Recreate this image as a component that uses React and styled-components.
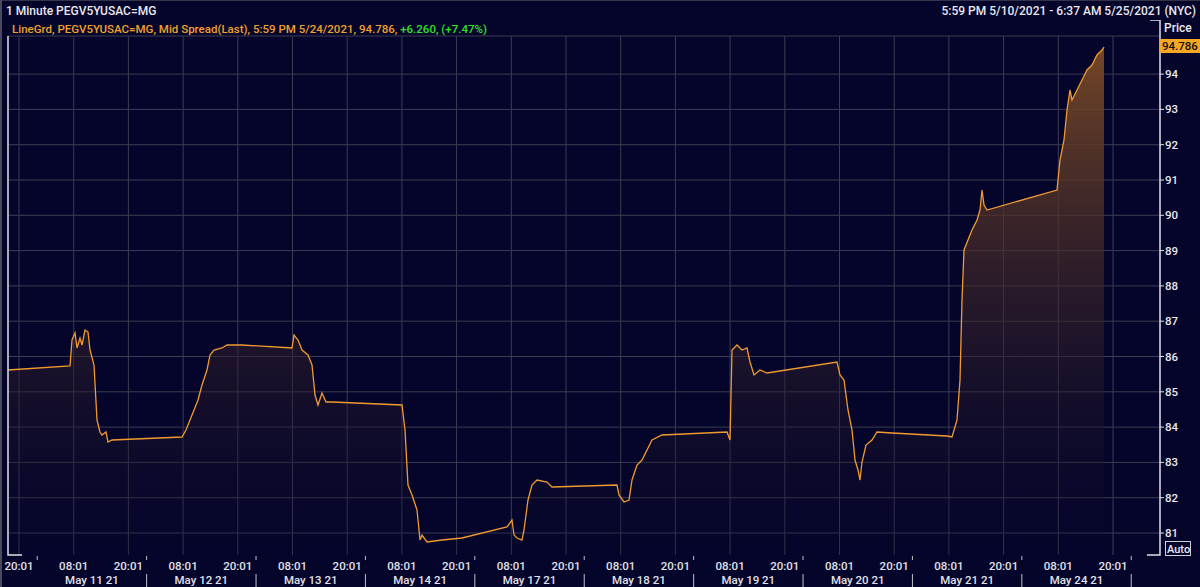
import React from "react";
import styled, { createGlobalStyle } from "styled-components";

const Global = createGlobalStyle`
  html, body { margin: 0; padding: 0; background: #05052b; }
  body { font-family: Roboto, "Liberation Sans", sans-serif; }
`;

const Window = styled.div`
  width: 1200px; height: 587px; background: #05052b; overflow: hidden;
  display: flex; flex-direction: column; border-left: 2px solid #4a4a5a; box-sizing: border-box;
`;
const Header = styled.div`
  height: 20px; display: flex; justify-content: space-between; align-items: center;
  padding: 0 4px 0 4px; color: #e8e8ee; font-size: 12px; font-weight: 500; border-top: 1px solid #33334a;
`;
const Body = styled.div`
  position: relative; flex: 1;
`;
const Legend = styled.div`
  position: absolute; left: 10px; top: 2px; font-size: 11.5px; font-weight: 500; color: #f0a030; white-space: pre;
`;
const Green = styled.span` color: #2fe02f; `;

const X0 = 17, DX = 54.7;
const yOf = (p) => 533 - (p - 81) * 35.3;

const pts = [[6,370],[68,366],[70,340],[73,333],[75,348],[78,338],[80,345],[83,330],[86,332],[88,350],[92,365],[95,420],[98,432],[100,435],[104,432],[106,442],[110,440],[180,437],[184,430],[190,415],[196,400],[200,385],[205,370],[208,355],[212,350],[220,348],[225,345],[240,345],[290,348],[292,335],[296,340],[300,350],[306,355],[310,365],[313,395],[316,405],[320,393],[324,402],[330,402],[400,405],[403,430],[406,485],[410,495],[415,510],[418,540],[420,535],[425,542],[440,540],[460,538],[505,527],[510,520],[512,535],[515,538],[520,540],[522,530],[526,500],[530,485],[535,480],[545,482],[550,487],[615,485],[617,495],[622,502],[627,500],[630,480],[635,465],[640,460],[650,440],[660,435],[725,432],[728,440],[730,350],[735,345],[740,350],[745,348],[748,362],[752,375],[758,370],[765,373],[835,362],[838,375],[842,380],[846,410],[850,430],[853,460],[856,470],[858,480],[860,462],[864,445],[870,440],[875,432],[890,433],[945,436],[950,437],[955,420],[958,380],[960,300],[962,250],[966,240],[970,230],[975,220],[978,210],[980,190],[982,205],[985,210],[1055,190],[1058,160],[1062,140],[1065,110],[1068,90],[1070,100],[1075,90],[1080,80],[1085,70],[1090,65],[1095,55],[1100,50],[1102,47]];

const line = pts.map((p, i) => (i ? "L" : "M") + p[0] + " " + p[1]).join(" ");
const area = line + " L1102 555 L6 555 Z";
const days = ["May 11 21","May 12 21","May 13 21","May 14 21","May 17 21","May 18 21","May 19 21","May 20 21","May 21 21","May 24 21"];
const sep = (i) => X0 + (2 * i + 1 / 3) * DX;

function Chart() {
  const vx = Array.from({ length: 21 }, (_, i) => X0 + i * DX);
  const prices = Array.from({ length: 14 }, (_, i) => 81 + i);
  return (
    <svg width="1198" height="567" viewBox="0 20 1198 567" style={{ display: "block" }}>
      <defs>
        <linearGradient id="g" x1="0" y1="0" x2="0" y2="1">
          <stop offset="0" stopColor="#7a4a26" stopOpacity="0.95" />
          <stop offset="1" stopColor="#05052b" stopOpacity="0.2" />
        </linearGradient>
      </defs>
      {vx.map((x) => <line key={x} x1={x} y1={36} x2={x} y2={555} stroke="#3c3c52" strokeWidth="1" />)}
      {prices.map((p) => <line key={p} x1={6} y1={yOf(p)} x2={1158} y2={yOf(p)} stroke="#3c3c52" strokeWidth="1" />)}
      <line x1="6" y1="36" x2="1158" y2="36" stroke="#3c3c52" />
      <path d={area} fill="url(#g)" />
      <path d={line} fill="none" stroke="#f09a30" strokeWidth="1.3" />
      <path d="M6 36 V555 H20 M1145 555 H1158 V20 H1148" fill="none" stroke="#e0e0e8" strokeWidth="1.5" />
      {prices.map((p) => (
        <g key={"t" + p}>
          <line x1="1158" y1={yOf(p)} x2="1162" y2={yOf(p)} stroke="#e0e0e8" />
          <text x="1163" y={yOf(p) + 4} fontSize="11.5" fontWeight="500" fill="#e8e8ee">{p}</text>
        </g>
      ))}
      <text x="1162" y="32" fontSize="12" fontWeight="500" fill="#e8e8ee">Price</text>
      <rect x="1158" y="39" width="42" height="14" fill="#f5a623" />
      <text x="1160" y="50" fontSize="11.5" fontWeight="500" fill="#101018">94.786</text>
      <rect x="1163.5" y="541.5" width="25" height="14" fill="none" stroke="#d0d0d8" />
      <text x="1165" y="553" fontSize="11" fontWeight="500" fill="#e8e8ee">Auto</text>
      {vx.map((x, i) => (
        <text key={"x" + i} x={x} y="570" fontSize="11.5" fontWeight="500" fill="#e0e0e8" textAnchor="middle">{i % 2 ? "08:01" : "20:01"}</text>
      ))}
      {Array.from({ length: 11 }, (_, i) => (
        <g key={"s" + i}>
          <line x1={sep(i)} y1="556" x2={sep(i)} y2="560" stroke="#c0c0c8" />
          {i > 0 && <line x1={sep(i)} y1="574" x2={sep(i)} y2="587" stroke="#c0c0c8" />}
        </g>
      ))}
      {days.map((d, i) => (
        <text key={d} x={(sep(i) + sep(i + 1)) / 2} y="584" fontSize="11.5" fontWeight="500" fill="#e0e0e8" textAnchor="middle">{d}</text>
      ))}
    </svg>
  );
}

export default function App() {
  return (
    <>
      <Global />
      <Window>
        <Header>
          <span>1 Minute PEGV5YUSAC=MG</span>
          <span>5:59 PM 5/10/2021 - 6:37 AM 5/25/2021 (NYC)</span>
        </Header>
        <Body>
          <Chart />
          <Legend>LineGrd, PEGV5YUSAC=MG, Mid Spread(Last), 5:59 PM 5/24/2021, 94.786, <Green>+6.260, (+7.47%)</Green></Legend>
        </Body>
      </Window>
    </>
  );
}
